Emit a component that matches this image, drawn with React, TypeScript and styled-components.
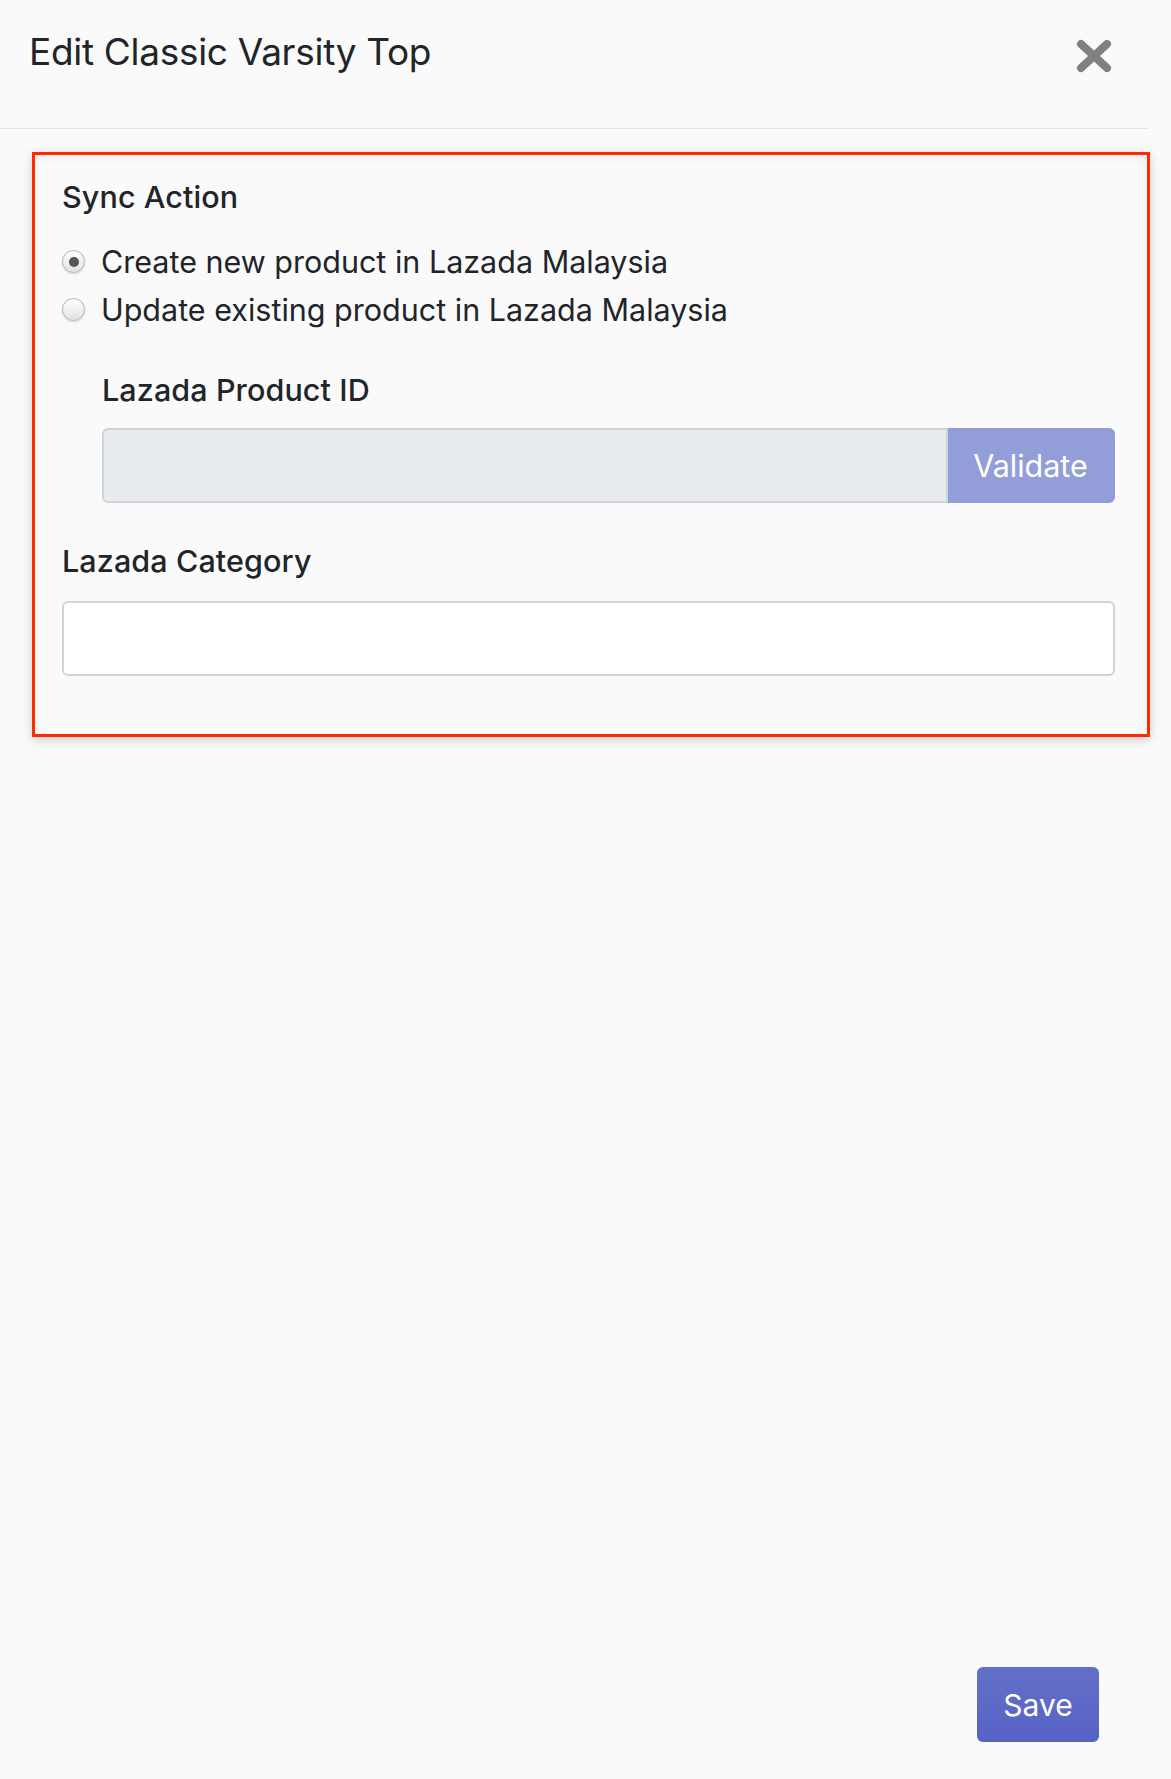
import React from 'react';
import styled, { createGlobalStyle } from 'styled-components';

const GlobalStyle = createGlobalStyle`
  html, body {
    margin: 0;
    padding: 0;
    background: #fafafa;
  }
  body {
    font-family: Inter, "Liberation Sans", Arial, sans-serif;
    color: #212529;
  }
`;

function Radio({ checked, label }: { checked?: boolean; label: string }) {
  return (
    <RadioRow>
      <RadioDot checked={checked} />
      <span>{label}</span>
    </RadioRow>
  );
}

function CloseIcon() {
  return (
    <svg width="36" height="34" viewBox="0 0 36 34">
      <g stroke="#808080" strokeWidth="8" strokeLinecap="round">
        <line x1="5" y1="5" x2="31" y2="29" />
        <line x1="31" y1="5" x2="5" y2="29" />
      </g>
    </svg>
  );
}

export default function App() {
  return (
    <>
      <GlobalStyle />
      <Page>
        <Header>
          <Title>Edit Classic Varsity Top</Title>
          <CloseButton aria-label="Close">
            <CloseIcon />
          </CloseButton>
        </Header>

        <Marked>
          <Label>Sync Action</Label>
          <RadioGroup>
            <Radio checked label="Create new product in Lazada Malaysia" />
            <Radio label="Update existing product in Lazada Malaysia" />
          </RadioGroup>

          <Nested>
            <Label>Lazada Product ID</Label>
            <InputGroup>
              <GroupField disabled value="" readOnly />
              <ValidateButton disabled>Validate</ValidateButton>
            </InputGroup>
          </Nested>

          <Section>
            <Label>Lazada Category</Label>
            <Field value="" readOnly />
          </Section>
        </Marked>

        <Footer>
          <SaveButton>Save</SaveButton>
        </Footer>
      </Page>
    </>
  );
}

const Page = styled.div`
  width: 1171px;
  height: 1779px;
  display: flex;
  flex-direction: column;
  box-sizing: border-box;
`;

const Header = styled.div`
  display: flex;
  align-items: flex-start;
  justify-content: space-between;
  width: 1149px;
  height: 129px;
  box-sizing: border-box;
  padding: 30px 0 0 29px;
  border-bottom: 1px solid #e6e6e6;
`;

const Title = styled.h5`
  margin: 0;
  font-size: 37px;
  font-weight: 400;
  line-height: 1.2;
  letter-spacing: -0.3px;
  color: #212529;
`;

const CloseButton = styled.button`
  border: 0;
  background: transparent;
  padding: 0;
  margin: 9px 37px 0 0;
  line-height: 0;
`;

const Marked = styled.div`
  margin: 23px 0 0 32px;
  width: 1118px;
  height: 585px;
  box-sizing: border-box;
  border: 3px solid #ff2a00;
  box-shadow: 0 3px 10px rgba(0, 0, 0, 0.18), inset 0 3px 8px rgba(0, 0, 0, 0.06);
  padding: 20px 32px 0 27px;
  display: flex;
  flex-direction: column;
`;

const Label = styled.div`
  font-size: 30.5px;
  line-height: 43.5px;
  font-weight: 500;
  letter-spacing: 0.1px;
  color: #212529;
`;

const RadioGroup = styled.div`
  margin-top: 19px;
  display: flex;
  flex-direction: column;
`;

const RadioRow = styled.label`
  display: flex;
  align-items: center;
  gap: 16px;
  height: 48px;
  font-size: 30.5px;
  color: #212529;
`;

const RadioDot = styled.span<{ checked?: boolean }>`
  position: relative;
  flex: none;
  width: 23px;
  height: 23px;
  border-radius: 50%;
  box-sizing: border-box;
  border: 1px solid #b4b4b4;
  background: linear-gradient(#ffffff, #e2e2e2);
  box-shadow: 0 1px 2px rgba(0, 0, 0, 0.15);
  &::after {
    content: '';
    display: ${({ checked }) => (checked ? 'block' : 'none')};
    position: absolute;
    left: 50%;
    top: 50%;
    width: 10px;
    height: 10px;
    margin: -5px 0 0 -5px;
    border-radius: 50%;
    background: #555;
  }
`;

const Nested = styled.div`
  margin: 34px 0 0 40px;
  display: flex;
  flex-direction: column;
  gap: 17px;
`;

const InputGroup = styled.div`
  display: flex;
  height: 75px;
`;

const Field = styled.input`
  display: block;
  width: 100%;
  height: 75px;
  box-sizing: border-box;
  border: 2px solid #ced4da;
  border-radius: 6px;
  background: #ffffff;
  font-family: inherit;
  font-size: 30px;
  padding: 0 18px;
  outline: none;
`;

const GroupField = styled(Field)`
  flex: 1;
  width: auto;
  min-width: 0;
  background: #e9ecef;
  border-top-right-radius: 0;
  border-bottom-right-radius: 0;
`;

const ValidateButton = styled.button`
  width: 167px;
  box-sizing: border-box;
  border: 2px solid #929dd8;
  border-left: 0;
  border-radius: 0 6px 6px 0;
  background: #939ed8;
  color: #ffffff;
  font-family: inherit;
  font-size: 30.5px;
  padding: 0;
`;

const Section = styled.div`
  margin-top: 36px;
  display: flex;
  flex-direction: column;
  gap: 18px;
`;

const Footer = styled.div`
  margin-top: auto;
  display: flex;
  justify-content: flex-end;
  padding: 0 72px 37px 0;
`;

const SaveButton = styled.button`
  width: 122px;
  height: 75px;
  border: 0;
  border-radius: 6px;
  background: linear-gradient(#6370c9, #5663c4);
  color: #ffffff;
  font-family: inherit;
  font-size: 30px;
  padding: 0;
`;
